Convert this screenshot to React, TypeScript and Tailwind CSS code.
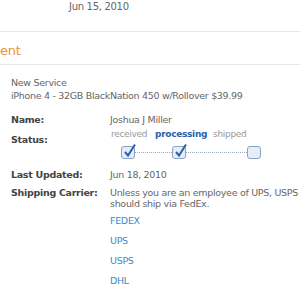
const Box = ({ checked }: { checked: boolean }) => (
  <div className="relative w-[14px] h-[13px] rounded-[3px] border border-[#8aa3c4] bg-[#e4edf8]">
    {checked && (
      <svg className="absolute left-[1px] -top-[4px]" width="14" height="15" viewBox="0 0 14 15">
        <path d="M2 9 L5 12.5 L12 1.5" fill="none" stroke="#2d5fae" strokeWidth="2" />
      </svg>
    )}
  </div>
);

const Dots = ({ w }: { w: string }) => (
  <div className={`${w} border-t border-dotted border-[#9aa8b8] mt-[6px] h-0`} />
);

const Label = ({ children, className = "" }: { children: React.ReactNode; className?: string }) => (
  <div className={`w-[99px] shrink-0 font-bold text-[#444] ${className}`}>{children}</div>
);

export default function App() {
  return (
    <div className="w-[300px] h-[300px] overflow-hidden bg-white text-[9.5px] leading-[11px] tracking-[-0.3px] text-[#666] font-['DejaVu_Sans',sans-serif]">
      <div className="pl-[69px] pt-[1px] h-[31px] text-[#666] text-[10px]">Jun 15, 2010</div>
      <div className="border-t border-[#e6e6e6]" />
      <div className="h-[32px] pt-[12px] text-[#f0942e] text-[13px] leading-[14px]">ent</div>
      <div className="border-t border-[#e6e6e6]" />
      <div className="pl-[11px] pt-[12px]">
        <div>New Service</div>
        <div className="mt-[2px]">iPhone 4 - 32GB BlackNation 450 w/Rollover $39.99</div>
      </div>
      <div className="pl-[11px] pt-[13px]">
        <div className="flex">
          <Label>Name:</Label>
          <div>Joshua J Miller</div>
        </div>
        <div className="flex mt-[2px]">
          <Label className="pt-[7px]">Status:</Label>
          <div className="pt-[2px]">
            <div className="flex text-[9px]">
              <span className="w-[45px] pl-[1px] text-[#999]">received</span>
              <span className="w-[58px] font-bold text-[#2e5fa8]">processing</span>
              <span className="text-[#999]">shipped</span>
            </div>
            <div className="flex pl-[11px] pt-[6px]">
              <Box checked />
              <Dots w="w-[37px]" />
              <Box checked />
              <Dots w="w-[61px]" />
              <Box checked={false} />
            </div>
          </div>
        </div>
        <div className="flex mt-[10px]">
          <Label>Last Updated:</Label>
          <div>Jun 18, 2010</div>
        </div>
        <div className="flex mt-[7px]">
          <Label>Shipping Carrier:</Label>
          <div className="whitespace-nowrap">
            <div>
              Unless you are an employee of UPS, USPS
              <br />
              should ship via FedEx.
            </div>
            <div className="flex flex-col gap-[9px] mt-[6px] text-[#3a8cc8]">
              <span>FEDEX</span>
              <span>UPS</span>
              <span>USPS</span>
              <span>DHL</span>
            </div>
          </div>
        </div>
      </div>
    </div>
  );
}
